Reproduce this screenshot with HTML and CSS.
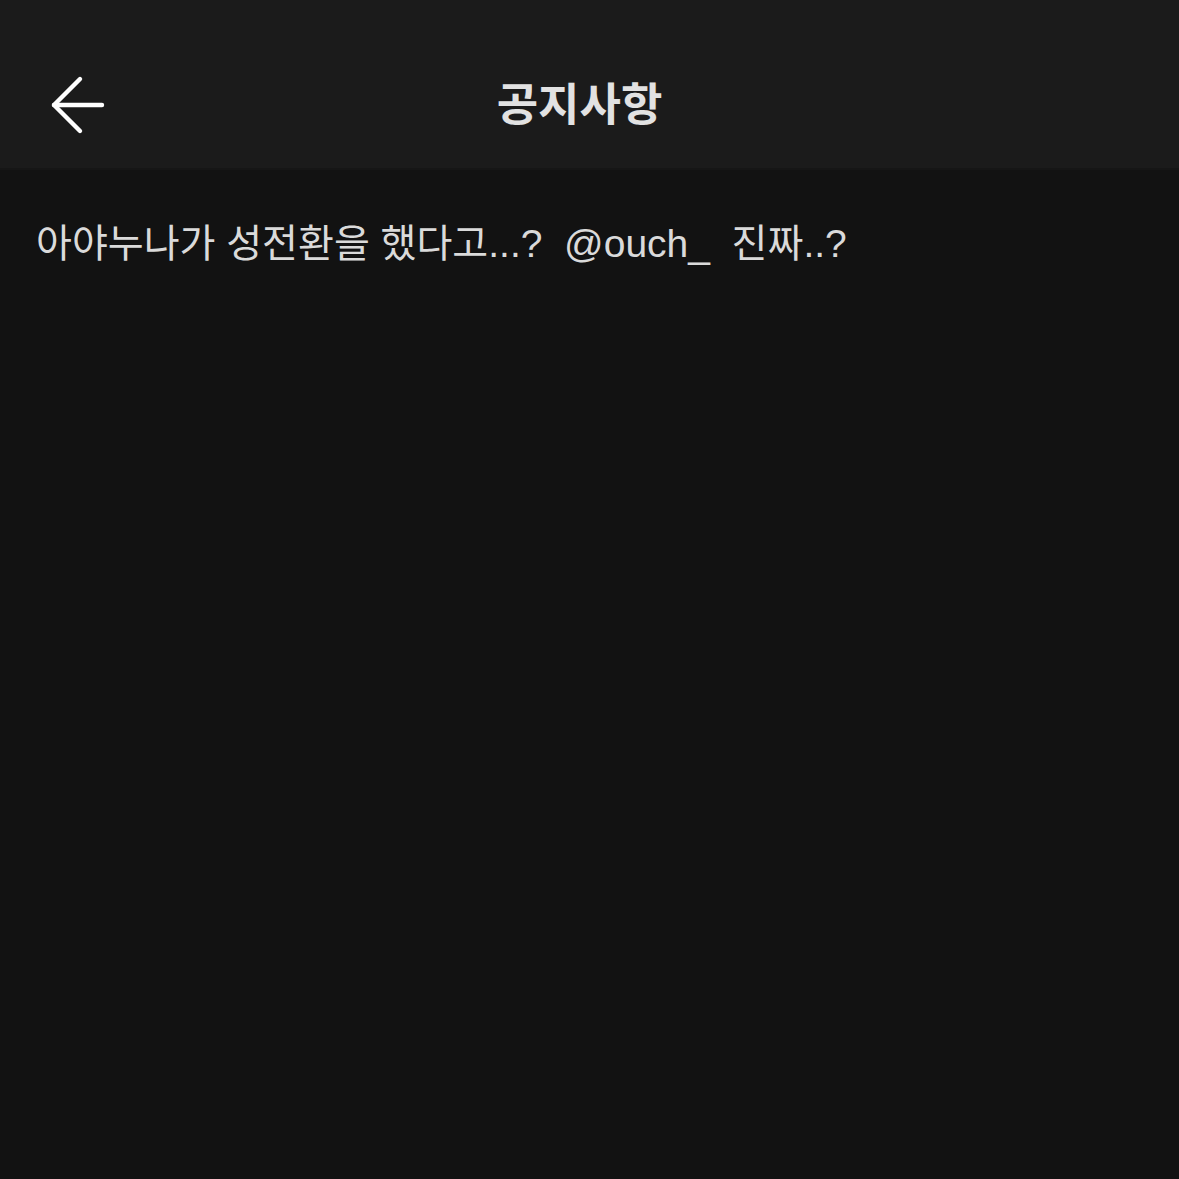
FILE: index.html
```html
<!DOCTYPE html>
<html lang="ko">
<head>
<meta charset="utf-8">
<link rel="stylesheet" href="styles.css">
</head>
<body>
<div class="app">
  <header class="topbar">
    <button class="back" aria-label="뒤로">
      <svg width="60" height="60" viewBox="0 0 60 60" fill="none" stroke="#ffffff" stroke-width="4.4" stroke-linecap="round" stroke-linejoin="round">
        <path d="M52 30H4"/>
        <path d="M30 4L4 30L30 56"/>
      </svg>
    </button>
    <h1 class="title">공지사항</h1>
    <span class="spacer"></span>
  </header>
  <main class="content">
    <p class="notice">아야누나가 성전환을 했다고...?&nbsp; @ouch_&nbsp; 진짜..?</p>
  </main>
</div>
</body>
</html>
```
FILE: styles.css
```css
html, body {
  margin: 0;
  padding: 0;
  background: #121212;
}
.app {
  width: 1179px;
  height: 1179px;
  display: flex;
  flex-direction: column;
  background: #121212;
  font-family: "Liberation Sans", "Noto Sans CJK KR", sans-serif;
}
.topbar {
  height: 170px;
  box-sizing: border-box;
  padding: 36px 24px 0 24px;
  background: #1b1b1b;
  border-bottom: 2px solid #161616;
  display: grid;
  grid-template-columns: 120px 1fr 140px;
  align-items: center;
}
.back {
  background: none;
  border: 0;
  padding: 0;
  margin: 6px 0 0 26px;
  width: 60px;
  height: 60px;
  display: flex;
  align-items: center;
  justify-content: center;
}
.title {
  margin: 0;
  text-align: center;
  color: #e2e2e2;
  font-family: "Noto Sans CJK KR", sans-serif;
  font-weight: 700;
  font-size: 45px;
  line-height: 60px;
}
.content {
  padding: 0 36px;
}
.notice {
  margin: 48px 0 0 0;
  color: #dadada;
  font-size: 39px;
  line-height: 52px;
  letter-spacing: 0;
}
```
